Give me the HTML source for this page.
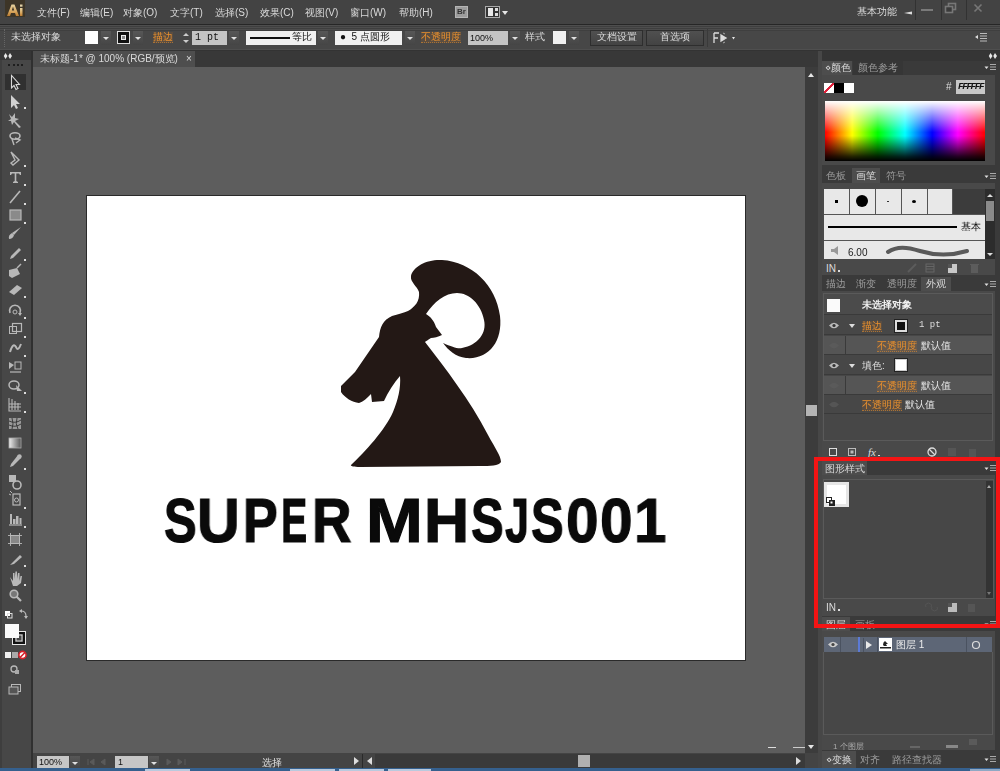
<!DOCTYPE html>
<html><head><meta charset="utf-8">
<style>
*{margin:0;padding:0;box-sizing:border-box}
html,body{width:1000px;height:771px;overflow:hidden;background:#3c3c3c;font-family:"Liberation Sans",sans-serif;color:#dadada;font-size:10px}
.a{position:absolute}
.t{position:absolute;white-space:nowrap;line-height:1;will-change:transform}
.or{color:#e8902e;background:rgba(190,110,40,.16);text-decoration:none!important;border-bottom:1px dotted rgba(232,144,46,.55);padding-bottom:0}
.dd{position:absolute;width:10px;height:14px;background:linear-gradient(#575757,#454545)}
.dd:after{content:"";position:absolute;left:2px;top:6px;border-left:3px solid transparent;border-right:3px solid transparent;border-top:3px solid #e0e0e0}
</style></head><body>
<!-- MENU BAR -->
<div class="a" id="menubar" style="left:0;top:0;width:1000px;height:24px;background:#434343"></div>
<div class="a" style="left:5px;top:0;width:20px;height:17px;background:#3d3527"></div>
<svg class="a" style="left:5px;top:0" width="20" height="17"><defs><linearGradient id="aig" x1="0" y1="0" x2="0" y2="1"><stop offset="0" stop-color="#e6d2a0"/><stop offset="0.6" stop-color="#d9a860"/><stop offset="1" stop-color="#b87a30"/></linearGradient></defs>
<path d="M2 16L6.5 4.5H9.5L14 16H11L10 13H6L5 16ZM6.8 10.5H9.2L8 6.5Z" fill="url(#aig)"/><rect x="15" y="8" width="2.5" height="8" fill="url(#aig)"/><rect x="15" y="4.5" width="2.5" height="2.2" fill="#e0d0a8"/></svg>
<div class="t" style="left:37px;top:8px">文件(F)</div>
<div class="t" style="left:80px;top:8px">编辑(E)</div>
<div class="t" style="left:123px;top:8px">对象(O)</div>
<div class="t" style="left:170px;top:8px">文字(T)</div>
<div class="t" style="left:215px;top:8px">选择(S)</div>
<div class="t" style="left:260px;top:8px">效果(C)</div>
<div class="t" style="left:305px;top:8px">视图(V)</div>
<div class="t" style="left:350px;top:8px">窗口(W)</div>
<div class="t" style="left:399px;top:8px">帮助(H)</div>
<div class="a" style="left:455px;top:6px;width:13px;height:12px;background:#9c9c9c;border:1px solid #b5b5b5"></div>
<div class="t" style="left:457px;top:8px;font-size:8px;font-weight:bold;color:#333">Br</div>
<div class="a" style="left:485px;top:6px;width:15px;height:12px;background:#333;border:1px solid #aaa"></div>
<div class="a" style="left:488px;top:8px;width:5px;height:8px;background:#e8e8e8"></div>
<div class="a" style="left:495px;top:8px;width:3px;height:3px;background:#ddd"></div>
<div class="a" style="left:495px;top:13px;width:3px;height:3px;background:#ddd"></div>
<div class="a" style="left:502px;top:11px;border-left:3px solid transparent;border-right:3px solid transparent;border-top:4px solid #e6e6e6"></div>
<div class="t" style="left:857px;top:7px">基本功能</div>
<svg class="a" style="left:903px;top:10px" width="10" height="6"><path d="M1 3L9 1.5L9 4.5Z" fill="#ddd"/></svg>
<div class="a" style="left:915px;top:0;width:1px;height:20px;background:#323232"></div>
<div class="a" style="left:941px;top:0;width:1px;height:20px;background:#323232"></div>
<div class="a" style="left:966px;top:0;width:1px;height:20px;background:#323232"></div>
<div class="a" style="left:921px;top:9px;width:12px;height:2px;background:#7a7a7a"></div>
<svg class="a" style="left:944px;top:2px" width="14" height="12"><rect x="4.5" y="1.5" width="7" height="6" fill="none" stroke="#777" stroke-width="1.6"/><rect x="1.5" y="4.5" width="7" height="6" fill="#3a3a3a" stroke="#777" stroke-width="1.6"/></svg>
<svg class="a" style="left:973px;top:3px" width="10" height="10"><path d="M1.5 1.5L8.5 8.5M8.5 1.5L1.5 8.5" stroke="#777" stroke-width="1.6"/></svg>


<!-- CONTROL BAR -->
<div class="a" style="left:0;top:24px;width:1000px;height:1px;background:#262626"></div>
<div class="a" style="left:0;top:25px;width:1000px;height:26px;background:linear-gradient(#4e4e4e 0,#4e4e4e 1px,#3e3e3e 1px,#3e3e3e 2px,#4d4d4d 2px,#4d4d4d 3px,#3e3e3e 3px,#3e3e3e 4px,#4c4c4c 4px,#4c4c4c 5px,#3f3f3f 5px,#3f3f3f 6px,#474747 6px,#474747 24px,#4f4f4f 24px,#4f4f4f 25px,#333 25px)"></div>
<div class="a" style="left:4px;top:29px;width:2px;height:18px;border-left:1px dotted #666"></div>
<div class="t" style="left:11px;top:32px">未选择对象</div>
<div class="a" style="left:85px;top:31px;width:13px;height:13px;background:#fff"></div>
<div class="dd" style="left:101px;top:31px"></div>
<div class="a" style="left:117px;top:31px;width:13px;height:13px;background:#111;border:1px solid #e0e0e0"></div><div class="a" style="left:121px;top:35px;width:5px;height:5px;background:#888;border:1px solid #eee"></div>
<div class="dd" style="left:133px;top:31px"></div>
<div class="t or" style="left:153px;top:32px;text-decoration:underline">描边</div>
<div class="a" style="left:183px;top:33px;border-left:3px solid transparent;border-right:3px solid transparent;border-bottom:3px solid #ccc"></div><div class="a" style="left:183px;top:40px;border-left:3px solid transparent;border-right:3px solid transparent;border-top:3px solid #ccc"></div>
<div class="a" style="left:192px;top:31px;width:35px;height:14px;background:#c4c4c4"></div>
<div class="t" style="left:195px;top:33px;color:#111;font-family:'Liberation Mono';font-size:10px">1 pt</div>
<div class="dd" style="left:229px;top:31px"></div>
<div class="a" style="left:246px;top:31px;width:70px;height:14px;background:#f0f0f0"></div>
<div class="a" style="left:250px;top:37px;width:40px;height:2px;background:#111"></div>
<div class="t" style="left:292px;top:32px;color:#111">等比</div>
<div class="dd" style="left:318px;top:31px"></div>
<div class="a" style="left:335px;top:31px;width:67px;height:14px;background:#f0f0f0"></div>
<div class="t" style="left:340px;top:32px;color:#111">●&nbsp; 5 点圆形</div>
<div class="dd" style="left:405px;top:31px"></div>
<div class="t or" style="left:421px;top:32px;text-decoration:underline">不透明度</div>
<div class="a" style="left:468px;top:31px;width:40px;height:14px;background:#c4c4c4"></div>
<div class="t" style="left:470px;top:34px;color:#111;font-size:9px">100%</div>
<div class="dd" style="left:510px;top:31px"></div>
<div class="t" style="left:525px;top:32px">样式</div>
<div class="a" style="left:553px;top:31px;width:13px;height:13px;background:#f0f0f0"></div>
<div class="dd" style="left:569px;top:31px"></div>
<div class="a" style="left:590px;top:30px;width:53px;height:16px;background:linear-gradient(#505050,#434343);border:1px solid #2e2e2e"></div>
<div class="t" style="left:597px;top:32px">文档设置</div>
<div class="a" style="left:646px;top:30px;width:58px;height:16px;background:linear-gradient(#505050,#434343);border:1px solid #2e2e2e"></div>
<div class="t" style="left:660px;top:32px">首选项</div>
<div class="a" style="left:707px;top:29px;width:1px;height:18px;background:#3a3a3a"></div>
<svg class="a" style="left:712px;top:31px" width="26" height="14"><path d="M2 2V12M2 2H7M2 7H6M9 4L14 7L9 10Z" stroke="#ddd" stroke-width="1.3" fill="#ddd"/><path d="M11 2L13 3M11 12L13 11" stroke="#aaa"/><path d="M20 6L23 6L21.5 8.5Z" fill="#e6e6e6"/></svg>


<svg class="a" style="left:974px;top:32px" width="14" height="10"><path d="M1 5L4 3L4 7Z" fill="#ddd"/><path d="M6 1.5H13M6 4H13M6 6.5H13M6 9H13" stroke="#bbb" stroke-width="1"/></svg>
<!-- LEFT TOOLBAR -->
<div class="a" style="left:0;top:51px;width:33px;height:720px;background:#474747"></div>
<div class="a" style="left:0;top:51px;width:2px;height:720px;background:#3e3e3e"></div>
<div class="a" style="left:31px;top:51px;width:2px;height:720px;background:#303030"></div>

<div class="a" style="left:0;top:51px;width:31px;height:9px;background:#363636"></div>
<svg class="a" style="left:3px;top:52px" width="10" height="8"><path d="M2.5 1L4.5 4L2.5 7L0.8 4ZM7 1L9 4L7 7L5.3 4Z" fill="#e6e6e6"/></svg>
<div class="a" style="left:8px;top:64px;width:15px;height:2px;border-top:2px dotted #1e1e1e"></div>
<div class="a" style="left:5px;top:74px;width:21px;height:16px;background:#303030"></div>
<svg class="a" style="left:0;top:60px" width="32" height="650" fill="#b8b8b8" stroke="none">
<g transform="translate(0,-60)">
<!-- selection -->
<path d="M11.5 75.5 L11.5 88 L14 85.5 L16 89.5 L18 88.5 L16 84.5 L19.5 84.5 Z" fill="#2a2a2a" stroke="#d8d8d8" stroke-width="1.1"/>
<!-- direct selection -->
<path d="M11 95 L11 108 L14 105 L16 109 L18 108 L16 104 L20 104 Z" fill="#d0d0d0"/>
<!-- wand -->
<path d="M9 114 L12 117 L15 113 L15 118 L19 119 L15 121 L21 127 L19 128 L14 122 L12 125 L11 121 L8 121 L11 119 Z" />
<!-- lasso -->
<ellipse cx="15" cy="136" rx="5" ry="3.2" fill="none" stroke="#b8b8b8" stroke-width="1.6"/><path d="M12 139 L14 145 M15 138 L20 140 L16 143" fill="none" stroke="#b8b8b8" stroke-width="1.4"/>
<!-- pen -->
<path d="M11 152 L19 160 L13 165 L11 163 L15 160 Z" fill="none" stroke="#b8b8b8" stroke-width="1.4"/>
<!-- type -->
<path d="M10 172 L21 172 L21 175 L20 175 L19 173.5 L16.3 173.5 L16.3 181 L18 182 L18 183 L13 183 L13 182 L14.7 181 L14.7 173.5 L12 173.5 L11 175 L10 175 Z"/>
<!-- line -->
<path d="M10 203 L20 191" stroke="#b8b8b8" stroke-width="1.6"/>
<!-- rect -->
<rect x="10" y="210" width="11" height="10" fill="#8a8a8a" stroke="#b8b8b8" stroke-width="1.2"/>
<!-- brush -->
<path d="M21 227 L14 235 L12 233 Z"/><path d="M12 233 Q8 235 9 239 Q13 239 14 235 Z"/>
<!-- pencil -->
<path d="M19 248 L21 250 L13 258 L10 259 L11 256 Z"/>
<!-- blob brush -->
<path d="M9 270 L17 268 L20 274 L12 278 L9 276 Z"/><path d="M17 268 L21 264" stroke="#b8b8b8" stroke-width="1.5"/>
<!-- eraser -->
<path d="M9 292 L17 285 L22 288 L14 295 Z"/>
<!-- rotate -->
<path d="M10 313 A5.5 5.5 0 1 1 20 313" fill="none" stroke="#b8b8b8" stroke-width="1.6"/><path d="M18 313 L22 313 L20 316Z"/><circle cx="15" cy="312" r="2" fill="none" stroke="#b8b8b8"/>
<!-- scale -->
<rect x="9.5" y="326.5" width="7" height="7" fill="none" stroke="#b8b8b8"/><rect x="12.5" y="323.5" width="9" height="8" fill="none" stroke="#b8b8b8" stroke-width="1.2"/>
<!-- warp -->
<path d="M10 352 Q13 342 16 347 Q18 352 21 344" fill="none" stroke="#b8b8b8" stroke-width="2"/>
<!-- free transform -->
<path d="M9 362 L14 365 L9 369 Z"/><rect x="15" y="362" width="6" height="7" fill="none" stroke="#b8b8b8"/><path d="M10 372 L21 372" stroke="#b8b8b8" stroke-width="1.2"/>
<!-- shape builder -->
<ellipse cx="14" cy="385" rx="5" ry="4" fill="none" stroke="#b8b8b8" stroke-width="1.5"/><path d="M16 385 L22 391 L17 391 Z"/>
<!-- perspective grid -->
<path d="M9 398 L9 411 L21 411 M12 399 L12 410 M15 401 L15 410 M18 403 L18 410 M9 404 L21 404 M9 407 L21 407" stroke="#b8b8b8" stroke-width="1.1" fill="none"/>
<!-- mesh -->
<rect x="9" y="418" width="12" height="11" fill="#999"/><path d="M9 421 Q15 424 21 420 M9 425 Q15 428 21 424 M12 418 Q14 424 12 429 M17 418 Q15 424 18 429" stroke="#333" fill="none" stroke-width="0.9"/>
<!-- gradient -->
<defs><linearGradient id="gg"><stop offset="0" stop-color="#eee"/><stop offset="1" stop-color="#555"/></linearGradient></defs>
<rect x="9" y="438" width="12" height="10" fill="url(#gg)" stroke="#aaa" stroke-width="0.8"/>
<!-- eyedropper -->
<path d="M18 455 L21 458 L13 466 L10 467 L11 464 Z"/><circle cx="19.5" cy="456.5" r="2.2"/>
<!-- blend -->
<rect x="9" y="475" width="7" height="7"/><circle cx="17" cy="485" r="4" fill="none" stroke="#b8b8b8" stroke-width="1.6"/>
<!-- symbol sprayer -->
<rect x="13" y="494" width="7" height="11" fill="none" stroke="#b8b8b8" stroke-width="1.2"/><circle cx="16.5" cy="500" r="2" fill="none" stroke="#b8b8b8"/><path d="M10 491 L12 493 M9 494 L11 495" stroke="#b8b8b8"/>
<!-- column graph -->
<path d="M9 525 L22 525" stroke="#b8b8b8" stroke-width="1.2"/><rect x="10" y="514" width="2" height="10"/><rect x="13" y="519" width="2.5" height="5"/><rect x="16" y="516" width="2.5" height="8"/><rect x="19.5" y="518" width="2" height="6"/>
<!-- artboard -->
<rect x="10.5" y="535.5" width="9" height="8" fill="#888" stroke="#b8b8b8"/><path d="M8 535.5 L22 535.5 M8 543.5 L22 543.5 M10.5 533 L10.5 546 M19.5 533 L19.5 546" stroke="#b8b8b8" stroke-width="0.9"/>
<!-- slice -->
<path d="M10 565 L20 555 L22 557 L14 564 Z"/>
<!-- hand -->
<path d="M10 577 L13 581 L13 573 L14.5 573 L14.5 579 L15.5 571.5 L17 571.5 L17 579 L18 573 L19.5 573 L19.5 581 L20.5 576 L22 576 L21 583 L17 586 L13 586 Z"/>
<!-- zoom -->
<circle cx="14" cy="594" r="3.8" fill="#777" stroke="#b8b8b8" stroke-width="1.6"/><path d="M16.5 596.5 L21 601" stroke="#b8b8b8" stroke-width="2.2"/>
<!-- default fill stroke -->
<rect x="5" y="611" width="5" height="5" fill="#fff"/><rect x="7.5" y="613.5" width="4.5" height="4.5" fill="none" stroke="#ddd" stroke-width="1"/>
<path d="M21 611 Q26 611 26 616" fill="none" stroke="#bbb" stroke-width="1.2"/><path d="M19 611 L22 609 L22 613Z M24 616 L28 616 L26 619Z" fill="#bbb"/>
<!-- fill & stroke -->
<rect x="12.5" y="631.5" width="13" height="13" fill="none" stroke="#e6e6e6" stroke-width="1"/>
<rect x="14" y="633" width="10" height="10" fill="none" stroke="#111" stroke-width="2"/>
<rect x="16" y="635" width="6" height="6" fill="none" stroke="#ddd" stroke-width="1"/>
<rect x="5" y="624" width="14" height="14" fill="#fafafa"/>
<!-- color gradient none -->
<rect x="5" y="652" width="6" height="6" fill="#f0f0f0"/><rect x="12" y="652" width="6" height="6" fill="#aaa"/><circle cx="22.5" cy="655" r="3.6" fill="#fff" stroke="#d8202a" stroke-width="1.6"/><path d="M20 657.5 L25 652.5" stroke="#d8202a" stroke-width="1.6"/>
<!-- draw mode -->
<circle cx="14" cy="669" r="3" fill="none" stroke="#b8b8b8" stroke-width="1.3"/><rect x="15" y="670" width="4" height="4" fill="#aaa"/>
<!-- screen mode -->
<rect x="11.5" y="684.5" width="9" height="7" fill="none" stroke="#b8b8b8"/><rect x="9" y="687" width="9" height="7" fill="#555" stroke="#b8b8b8" stroke-width="1"/>
<!-- flyout dots -->
<g fill="#ddd">
<rect x="24" y="107" width="2" height="2"/><rect x="24" y="165" width="2" height="2"/><rect x="24" y="184" width="2" height="2"/><rect x="24" y="203" width="2" height="2"/><rect x="24" y="222" width="2" height="2"/><rect x="24" y="259" width="2" height="2"/><rect x="24" y="296" width="2" height="2"/><rect x="24" y="317" width="2" height="2"/><rect x="24" y="336" width="2" height="2"/><rect x="24" y="355" width="2" height="2"/><rect x="24" y="392" width="2" height="2"/><rect x="24" y="411" width="2" height="2"/><rect x="24" y="468" width="2" height="2"/><rect x="24" y="507" width="2" height="2"/><rect x="24" y="526" width="2" height="2"/><rect x="24" y="565" width="2" height="2"/><rect x="24" y="584" width="2" height="2"/>
</g>
</g></svg>
<!-- DOC TAB ROW -->
<div class="a" style="left:33px;top:51px;width:785px;height:16px;background:#383838"></div>
<div class="a" style="left:33px;top:51px;width:162px;height:16px;background:#4e4e4e"></div>
<div class="t" style="left:40px;top:54px">未标题-1* @ 100% (RGB/预览)</div>
<div class="t" style="left:186px;top:54px">×</div>

<!-- CANVAS -->
<div class="a" style="left:33px;top:67px;width:772px;height:686px;background:#5d5d5d"></div>
<div class="a" style="left:86px;top:195px;width:660px;height:466px;background:#fff;border:1px solid #2a2a2a"></div>

<svg class="a" style="left:0;top:0" width="1000" height="771"><path fill="#231815" d="M341 386
L355 372 L379 337
C380 327 383 320 392 316
C398 314 404 313 408 311
C415 307 420 301 419 292
C417 286 410 282 411 276
C413 266 428 259 442 260
C472 262 496 285 500 316
C503 342 488 360 466 358
C456 357 448 350 443 343
C452 347 458 349 462 348
C478 345 487 333 484 320
C481 304 469 293 457 293
C445 293 434 302 426 314
C431 317 434 321 436 327
L442 335
C438 337 434 338 431 338
C428 340 426 341 425 342
C445 368 470 400 488 435
C495 448 501 456 501 462
C499 466 490 466 480 466
L360 467
C354 467 350 466 351 465
C365 452 385 430 393 412
C398 400 401 388 400 376
C394 383 388 392 384 401
L372 402 L371 394
C367 398 363 402 359 403
C352 402 345 398 341 392 Z"/></svg>
<div class="t" style="left:164.43px;top:489px;font-size:62.5px;font-weight:bold;color:#0a0a0a;-webkit-text-stroke:1.2px #0a0a0a;transform:scaleX(0.7838);transform-origin:0 0">S</div>
<div class="t" style="left:197.22px;top:489px;font-size:62.5px;font-weight:bold;color:#0a0a0a;-webkit-text-stroke:1.2px #0a0a0a;transform:scaleX(0.9459);transform-origin:0 0">U</div>
<div class="t" style="left:242.67px;top:489px;font-size:62.5px;font-weight:bold;color:#0a0a0a;-webkit-text-stroke:1.2px #0a0a0a;transform:scaleX(0.8333);transform-origin:0 0">P</div>
<div class="t" style="left:281.49px;top:489px;font-size:62.5px;font-weight:bold;color:#0a0a0a;-webkit-text-stroke:1.2px #0a0a0a;transform:scaleX(0.6286);transform-origin:0 0">E</div>
<div class="t" style="left:311.50px;top:489px;font-size:62.5px;font-weight:bold;color:#0a0a0a;-webkit-text-stroke:1.2px #0a0a0a;transform:scaleX(0.8750);transform-origin:0 0">R</div>
<div class="t" style="left:365.64px;top:489px;font-size:62.5px;font-weight:bold;color:#0a0a0a;-webkit-text-stroke:1.2px #0a0a0a;transform:scaleX(1.0909);transform-origin:0 0">M</div>
<div class="t" style="left:424.00px;top:489px;font-size:62.5px;font-weight:bold;color:#0a0a0a;-webkit-text-stroke:1.2px #0a0a0a;transform:scaleX(1.0000);transform-origin:0 0">H</div>
<div class="t" style="left:471.43px;top:489px;font-size:62.5px;font-weight:bold;color:#0a0a0a;-webkit-text-stroke:1.2px #0a0a0a;transform:scaleX(0.7838);transform-origin:0 0">S</div>
<div class="t" style="left:505.31px;top:489px;font-size:62.5px;font-weight:bold;color:#0a0a0a;-webkit-text-stroke:1.2px #0a0a0a;transform:scaleX(0.6897);transform-origin:0 0">J</div>
<div class="t" style="left:531.43px;top:489px;font-size:62.5px;font-weight:bold;color:#0a0a0a;-webkit-text-stroke:1.2px #0a0a0a;transform:scaleX(0.7838);transform-origin:0 0">S</div>
<div class="t" style="left:566.13px;top:489px;font-size:62.5px;font-weight:bold;color:#0a0a0a;-webkit-text-stroke:1.2px #0a0a0a;transform:scaleX(0.9333);transform-origin:0 0">0</div>
<div class="t" style="left:600.13px;top:489px;font-size:62.5px;font-weight:bold;color:#0a0a0a;-webkit-text-stroke:1.2px #0a0a0a;transform:scaleX(0.9333);transform-origin:0 0">0</div>
<div class="t" style="left:634.28px;top:489px;font-size:62.5px;font-weight:bold;color:#0a0a0a;-webkit-text-stroke:1.2px #0a0a0a;transform:scaleX(0.9310);transform-origin:0 0">1</div>
<!-- V SCROLL -->
<div class="a" style="left:805px;top:67px;width:13px;height:686px;background:#3c3c3c"></div>
<div class="a" style="left:806px;top:405px;width:11px;height:11px;background:#b4b4b4"></div>

<!-- STATUS BAR -->
<div class="a" style="left:33px;top:753px;width:785px;height:15px;background:#444"></div>
<div class="a" style="left:375px;top:754px;width:430px;height:14px;background:#3a3a3a"></div>
<div class="a" style="left:37px;top:756px;width:32px;height:12px;background:#c6c6c6"></div>
<div class="t" style="left:39px;top:758px;font-size:9px;color:#111">100%</div>
<div class="dd" style="left:70px;top:756px;height:12px"></div>
<svg class="a" style="left:86px;top:757px" width="24" height="10"><path d="M2 2V8M8 2L4 5L8 8ZM19 2L15 5L19 8Z" fill="#5a5a5a" stroke="#5a5a5a"/></svg>
<div class="a" style="left:115px;top:756px;width:33px;height:12px;background:#c6c6c6"></div>
<div class="t" style="left:118px;top:758px;font-size:9px;color:#111">1</div>
<div class="dd" style="left:149px;top:756px;height:12px"></div>
<svg class="a" style="left:164px;top:757px" width="24" height="10"><path d="M3 2L7 5L3 8ZM14 2L18 5L14 8ZM21 2V8" fill="#5a5a5a" stroke="#5a5a5a"/></svg>
<div class="t" style="left:262px;top:758px;color:#e0e0e0">选择</div>
<div class="a" style="left:354px;top:757px;border-top:4px solid transparent;border-bottom:4px solid transparent;border-left:5px solid #ddd"></div>
<div class="a" style="left:362px;top:754px;width:1px;height:14px;background:#2a2a2a"></div>
<div class="a" style="left:367px;top:757px;border-top:4px solid transparent;border-bottom:4px solid transparent;border-right:5px solid #ddd"></div>
<div class="a" style="left:578px;top:755px;width:12px;height:12px;background:#b0b0b0"></div>
<div class="a" style="left:796px;top:757px;border-top:4px solid transparent;border-bottom:4px solid transparent;border-left:5px solid #ddd"></div>
<div class="a" style="left:805px;top:753px;width:13px;height:15px;background:#444"></div>
<div class="a" style="left:808px;top:73px;border-left:3.5px solid transparent;border-right:3.5px solid transparent;border-bottom:4px solid #e6e6e6"></div>
<div class="a" style="left:808px;top:745px;border-left:3.5px solid transparent;border-right:3.5px solid transparent;border-top:4px solid #e6e6e6"></div>
<div class="a" style="left:0;top:768px;width:1000px;height:3px;background:#35608e"></div>
<div class="a" style="left:145px;top:769px;width:45px;height:2px;background:#b9cade"></div>
<div class="a" style="left:290px;top:769px;width:45px;height:2px;background:#b9cade"></div>
<div class="a" style="left:339px;top:769px;width:45px;height:2px;background:#b9cade"></div>
<div class="a" style="left:388px;top:769px;width:43px;height:2px;background:#b9cade"></div>
<div class="a" style="left:970px;top:769px;width:30px;height:2px;background:#8fa8c4"></div>

<div class="a" style="left:768px;top:747px;width:8px;height:1px;background:#ddd"></div>
<div class="a" style="left:793px;top:747px;width:12px;height:1px;background:#ccc"></div>
<!-- RIGHT PANEL -->
<div class="a" style="left:818px;top:51px;width:182px;height:717px;background:#3a3a3a"></div>
<div class="a" style="left:818px;top:51px;width:4px;height:717px;background:#474747"></div>
<!-- dock header -->
<div class="a" style="left:822px;top:51px;width:178px;height:10px;background:#353535"></div>
<svg class="a" style="left:988px;top:52px" width="10" height="8"><path d="M2.5 1L4.5 4L2.5 7L0.8 4ZM7 1L9 4L7 7L5.3 4Z" fill="#e6e6e6"/></svg>
<!-- group1 color -->
<div class="a" style="left:822px;top:61px;width:173px;height:104px;background:#494949"></div>
<div class="a" style="left:822px;top:61px;width:173px;height:14px;background:#3a3a3a"></div>
<div class="a" style="left:822px;top:61px;width:30px;height:14px;background:#4d4d4d"></div>
<div class="t" style="left:825px;top:63px;font-size:10px">&#8900;颜色</div>
<div class="a" style="left:853px;top:61px;width:50px;height:14px;background:#363636"></div>
<div class="t" style="left:858px;top:63px;color:#9c9c9c">颜色参考</div>
<div class="a" style="left:824px;top:83px;width:10px;height:10px;background:linear-gradient(135deg,#fff 42%,#e0203a 42%,#e0203a 58%,#fff 58%)"></div>
<div class="a" style="left:834px;top:83px;width:10px;height:10px;background:#000"></div>
<div class="a" style="left:844px;top:83px;width:10px;height:10px;background:#fff"></div>
<div class="t" style="left:946px;top:82px;color:#ddd">#</div>
<div class="a" style="left:956px;top:80px;width:29px;height:14px;background:#c8c8c8"></div>
<div class="t" style="left:958px;top:83px;color:#111;font-size:9px;font-family:'Liberation Mono';letter-spacing:-1.2px;font-style:italic;font-weight:bold">FFFFFF</div>
<div class="a" style="left:825px;top:101px;width:160px;height:60px;background:linear-gradient(to bottom,rgba(255,255,255,1) 0%,rgba(255,255,255,0) 52%,rgba(0,0,0,0) 58%,rgba(0,0,0,.85) 92%,rgba(0,0,0,1) 100%),linear-gradient(to right,#f00 0%,#ff0 17%,#0f0 33%,#0ff 50%,#00f 67%,#f0f 83%,#f00 100%)"></div>
<!-- group2 brushes -->
<div class="a" style="left:822px;top:168px;width:173px;height:107px;background:#494949"></div>
<div class="a" style="left:822px;top:168px;width:173px;height:15px;background:#3a3a3a"></div>
<div class="t" style="left:826px;top:171px;color:#9c9c9c">色板</div>
<div class="a" style="left:852px;top:168px;width:28px;height:15px;background:#4d4d4d"></div>
<div class="t" style="left:856px;top:171px">画笔</div>
<div class="t" style="left:886px;top:171px;color:#9c9c9c">符号</div>
<div class="a" style="left:824px;top:189px;width:161px;height:70px;background:#e8e8e8"></div>
<div class="a" style="left:953px;top:189px;width:32px;height:25px;background:#3c3c3c"></div>
<div class="a" style="left:849px;top:189px;width:1px;height:25px;background:#555"></div>
<div class="a" style="left:875px;top:189px;width:1px;height:25px;background:#555"></div>
<div class="a" style="left:901px;top:189px;width:1px;height:25px;background:#555"></div>
<div class="a" style="left:927px;top:189px;width:1px;height:25px;background:#555"></div>
<div class="a" style="left:952px;top:189px;width:1px;height:25px;background:#555"></div>
<div class="a" style="left:824px;top:214px;width:161px;height:1px;background:#555"></div>
<div class="a" style="left:824px;top:240px;width:161px;height:1px;background:#555"></div>
<div class="a" style="left:835px;top:200px;width:3px;height:3px;background:#000"></div>
<div class="a" style="left:856px;top:195px;width:12px;height:12px;border-radius:50%;background:#000"></div>
<div class="a" style="left:887px;top:201px;width:2px;height:1px;background:#333"></div>
<div class="a" style="left:912px;top:200px;width:4px;height:3px;border-radius:50%;background:#000"></div>
<div class="a" style="left:828px;top:226px;width:129px;height:2px;background:#000"></div>
<div class="t" style="left:961px;top:222px;color:#111">基本</div>
<div class="t" style="left:848px;top:248px;color:#222;font-size:10px">6.00</div>
<svg class="a" style="left:829px;top:244px" width="14" height="12"><path d="M2 5h3l4-3v9l-4-3H2z" fill="#999"/></svg>
<svg class="a" style="left:885px;top:243px" width="85" height="14"><path d="M3 9 C12 3,22 4,35 8 S62 14,82 8" stroke="#5a5a5a" stroke-width="4" fill="none" stroke-linecap="round" style="filter:blur(0.6px)"/></svg>
<div class="a" style="left:985px;top:189px;width:10px;height:70px;background:#2c2c2c"></div>
<div class="a" style="left:986px;top:201px;width:8px;height:20px;background:#8a8a8a"></div>
<svg class="a" style="left:824px;top:261px" width="170" height="14">
<text x="2" y="11" font-family="Liberation Sans" font-size="10" fill="#ddd">IN</text><rect x="14" y="9" width="2" height="2" fill="#ddd"/>
<path d="M84 11L92 3" stroke="#5c5c5c" stroke-width="2"/>
<rect x="102" y="3" width="8" height="8" fill="none" stroke="#666"/><path d="M102 5.5H110M102 8H110" stroke="#666"/>
<rect x="124" y="3" width="9" height="9" fill="#c8c8c8"/><rect x="124" y="3" width="4" height="4" fill="#555"/>
<rect x="147" y="4" width="7" height="8" fill="#5c5c5c"/><rect x="146" y="3" width="9" height="1" fill="#5c5c5c"/>
</svg>
<div class="a" style="left:987px;top:194px;border-left:3px solid transparent;border-right:3px solid transparent;border-bottom:3px solid #ddd"></div>
<div class="a" style="left:987px;top:253px;border-left:3px solid transparent;border-right:3px solid transparent;border-top:3px solid #ddd"></div>
<!-- group3 appearance -->
<div class="a" style="left:822px;top:277px;width:173px;height:183px;background:#494949"></div>
<div class="a" style="left:822px;top:277px;width:173px;height:14px;background:#3a3a3a"></div>
<div class="t" style="left:826px;top:279px;color:#9c9c9c">描边</div>
<div class="t" style="left:856px;top:279px;color:#9c9c9c">渐变</div>
<div class="t" style="left:887px;top:279px;color:#9c9c9c">透明度</div>
<div class="a" style="left:921px;top:277px;width:30px;height:14px;background:#4d4d4d"></div>
<div class="t" style="left:926px;top:279px">外观</div>
<div class="a" style="left:823px;top:293px;width:170px;height:148px;background:#474747;border:1px solid #5a5a5a"></div>
<div class="a" style="left:824px;top:294px;width:168px;height:21px;background:#4b4b4b;border-bottom:1px solid #3a3a3a"></div>
<div class="a" style="left:827px;top:299px;width:13px;height:13px;background:#fafafa"></div>
<div class="t" style="left:862px;top:300px;color:#f0f0f0;font-weight:bold">未选择对象</div>
<div class="a" style="left:824px;top:316px;width:168px;height:19px;background:#474747;border-bottom:1px solid #3a3a3a"></div>
<div class="a" style="left:824px;top:336px;width:168px;height:19px;background:#555555;border-bottom:1px solid #3a3a3a"></div>
<div class="a" style="left:824px;top:356px;width:168px;height:19px;background:#474747;border-bottom:1px solid #3a3a3a"></div>
<div class="a" style="left:824px;top:376px;width:168px;height:19px;background:#555555;border-bottom:1px solid #3a3a3a"></div>
<div class="a" style="left:824px;top:395px;width:168px;height:19px;background:#474747;border-bottom:1px solid #3a3a3a"></div>
<div class="a" style="left:845px;top:336px;width:1px;height:19px;background:#3a3a3a"></div>
<div class="a" style="left:845px;top:376px;width:1px;height:19px;background:#3a3a3a"></div>
<svg class="a" style="left:828px;top:321px" width="12" height="9"><path d="M1 4.5Q6 -1 11 4.5Q6 10 1 4.5z" fill="#bbb"/><circle cx="6" cy="4.5" r="1.6" fill="#333"/></svg>
<svg class="a" style="left:828px;top:341px" width="12" height="9"><path d="M1 4.5Q6 -1 11 4.5Q6 10 1 4.5z" fill="#5a5a5a"/></svg>
<svg class="a" style="left:828px;top:361px" width="12" height="9"><path d="M1 4.5Q6 -1 11 4.5Q6 10 1 4.5z" fill="#bbb"/><circle cx="6" cy="4.5" r="1.6" fill="#333"/></svg>
<svg class="a" style="left:828px;top:381px" width="12" height="9"><path d="M1 4.5Q6 -1 11 4.5Q6 10 1 4.5z" fill="#5a5a5a"/></svg>
<svg class="a" style="left:828px;top:400px" width="12" height="9"><path d="M1 4.5Q6 -1 11 4.5Q6 10 1 4.5z" fill="#555"/></svg>
<div class="a" style="left:849px;top:324px;border-left:3px solid transparent;border-right:3px solid transparent;border-top:4px solid #ddd"></div>
<div class="a" style="left:849px;top:364px;border-left:3px solid transparent;border-right:3px solid transparent;border-top:4px solid #ddd"></div>
<div class="t or" style="left:862px;top:321px;text-decoration:underline">描边</div>
<div class="a" style="left:895px;top:320px;width:12px;height:12px;background:#111;border:2px solid #ddd;outline:1px solid #222"></div>
<div class="t" style="left:919px;top:321px;font-family:'Liberation Mono';font-size:9px;color:#ddd">1 pt</div>
<div class="t or" style="left:877px;top:341px;text-decoration:underline">不透明度</div>
<div class="t" style="left:921px;top:341px;color:#e6e6e6">默认值</div>
<div class="t" style="left:862px;top:361px;color:#ddd">填色:</div>
<div class="a" style="left:895px;top:359px;width:12px;height:12px;background:#fff;border:1px solid #ccc;outline:1px solid #222"></div>
<div class="t or" style="left:877px;top:381px;text-decoration:underline">不透明度</div>
<div class="t" style="left:921px;top:381px;color:#e6e6e6">默认值</div>
<div class="t or" style="left:862px;top:400px;text-decoration:underline">不透明度</div>
<div class="t" style="left:905px;top:400px;color:#e6e6e6">默认值</div>
<!-- appearance footer -->
<svg class="a" style="left:826px;top:446px" width="160" height="12">
<rect x="3.5" y="2.5" width="7" height="7" fill="none" stroke="#ddd" stroke-width="1"/>
<rect x="22.5" y="2.5" width="7" height="7" fill="none" stroke="#bbb"/><rect x="24.5" y="4.5" width="3" height="3" fill="#bbb"/>
<text x="42" y="10" font-family="Liberation Serif" font-style="italic" font-size="11" fill="#ddd">fx</text><rect x="52" y="9" width="2" height="1" fill="#ddd"/>
<circle cx="106" cy="6" r="4" fill="none" stroke="#ddd" stroke-width="1.3"/><path d="M103 3L109 9" stroke="#ddd" stroke-width="1.3"/>
<rect x="122" y="2" width="8" height="8" fill="#555"/>
<rect x="143" y="3" width="7" height="8" fill="#555"/>
</svg>
<!-- group4 graphic styles -->
<div class="a" style="left:822px;top:461px;width:173px;height:155px;background:#494949"></div>
<div class="a" style="left:822px;top:461px;width:173px;height:14px;background:#3a3a3a"></div>
<div class="a" style="left:822px;top:461px;width:45px;height:14px;background:#4d4d4d"></div>
<div class="t" style="left:825px;top:464px">图形样式</div>
<div class="a" style="left:823px;top:479px;width:171px;height:120px;background:#474747;border:1px solid #5a5a5a"></div>
<div class="a" style="left:824px;top:482px;width:25px;height:25px;background:#e6e6e6"></div>
<div class="a" style="left:827px;top:485px;width:19px;height:19px;background:#fff"></div>
<svg class="a" style="left:824px;top:600px" width="160" height="14">
<text x="2" y="11" font-family="Liberation Sans" font-size="10" fill="#ddd">IN</text><rect x="14" y="9" width="2" height="2" fill="#ddd"/>
<path d="M102 7a3 2.5 0 1 1 5 0M108 7a3 2.5 0 1 0 5 0" stroke="#555" fill="none"/>
<rect x="124" y="3" width="9" height="9" fill="#bbb"/><rect x="124" y="3" width="4" height="4" fill="#555"/>
<rect x="144" y="4" width="7" height="8" fill="#555"/>
</svg>
<div class="a" style="left:986px;top:481px;width:7px;height:117px;background:#333"></div>
<svg class="a" style="left:826px;top:497px" width="10" height="10"><rect x="0.5" y="0.5" width="5" height="5" fill="#fff" stroke="#222"/><rect x="3.5" y="3.5" width="5" height="5" fill="#222" stroke="#222"/><rect x="4.5" y="4.5" width="2" height="2" fill="#fff"/></svg>
<div class="a" style="left:987px;top:485px;border-left:2.5px solid transparent;border-right:2.5px solid transparent;border-bottom:3px solid #aaa"></div>
<div class="a" style="left:987px;top:592px;border-left:2.5px solid transparent;border-right:2.5px solid transparent;border-top:3px solid #777"></div>
<!-- group5 layers -->
<div class="a" style="left:822px;top:617px;width:173px;height:133px;background:#494949"></div>
<div class="a" style="left:822px;top:617px;width:173px;height:14px;background:#3a3a3a"></div>
<div class="a" style="left:822px;top:617px;width:28px;height:14px;background:#4d4d4d"></div>
<div class="t" style="left:826px;top:620px">图层</div>
<div class="t" style="left:855px;top:620px;color:#9c9c9c">画板</div>
<div class="a" style="left:824px;top:637px;width:168px;height:15px;background:#5d6676"></div>
<div class="a" style="left:840px;top:637px;width:1px;height:15px;background:#4a5260"></div>
<div class="a" style="left:858px;top:637px;width:2px;height:15px;background:#5b7ad6"></div>
<div class="a" style="left:863px;top:638px;width:1px;height:14px;background:#4a5260"></div>
<div class="a" style="left:877px;top:637px;width:1px;height:15px;background:#4a5260"></div>
<div class="a" style="left:966px;top:637px;width:1px;height:15px;background:#4a5260"></div>
<svg class="a" style="left:827px;top:640px" width="12" height="9"><path d="M1 4.5Q6 -1 11 4.5Q6 10 1 4.5z" fill="#ccc"/><circle cx="6" cy="4.5" r="1.6" fill="#444"/></svg>
<div class="a" style="left:866px;top:641px;border-top:4px solid transparent;border-bottom:4px solid transparent;border-left:6px solid #e8e8e8"></div>
<div class="a" style="left:879px;top:638px;width:13px;height:13px;background:#fff"></div>
<svg class="a" style="left:879px;top:638px" width="13" height="13"><path d="M6 3q-2 1-2 4l1 1h3l-1-2 2 0z" fill="#222"/><rect x="1" y="9" width="11" height="1.5" fill="#222"/></svg>
<div class="t" style="left:896px;top:640px;color:#eee">图层 1</div>
<svg class="a" style="left:971px;top:640px" width="10" height="10"><circle cx="5" cy="5" r="3.5" fill="none" stroke="#ddd" stroke-width="1.2"/></svg>
<div class="a" style="left:823px;top:652px;width:170px;height:83px;background:#474747;border:1px solid #5a5a5a;border-top:none"></div>
<svg class="a" style="left:824px;top:739px" width="168" height="12">
<text x="9" y="10" font-size="8" fill="#aaa" font-family="Liberation Sans">1 个图层</text>
<rect x="86" y="7" width="10" height="2" fill="#666"/><rect x="122" y="6" width="12" height="3" fill="#888"/>
<rect x="145" y="-3" width="8" height="9" fill="#5a5a5a"/>
</svg>
<!-- group6 -->
<div class="a" style="left:822px;top:751px;width:173px;height:17px;background:#3a3a3a"></div>
<div class="a" style="left:822px;top:751px;width:34px;height:17px;background:#4d4d4d"></div>
<div class="t" style="left:826px;top:755px">&#8900;变换</div>
<div class="t" style="left:860px;top:755px;color:#9c9c9c">对齐</div>
<div class="t" style="left:892px;top:755px;color:#9c9c9c">路径查找器</div>
<svg class="a" style="left:984px;top:63px" width="13" height="9"><path d="M0.5 3.5L4.5 3.5L2.5 6Z" fill="#e0e0e0"/><path d="M6 1.5H12M6 4H12M6 6.5H12" stroke="#aaa" stroke-width="1"/></svg>
<svg class="a" style="left:984px;top:172px" width="13" height="9"><path d="M0.5 3.5L4.5 3.5L2.5 6Z" fill="#e0e0e0"/><path d="M6 1.5H12M6 4H12M6 6.5H12" stroke="#aaa" stroke-width="1"/></svg>
<svg class="a" style="left:984px;top:280px" width="13" height="9"><path d="M0.5 3.5L4.5 3.5L2.5 6Z" fill="#e0e0e0"/><path d="M6 1.5H12M6 4H12M6 6.5H12" stroke="#aaa" stroke-width="1"/></svg>
<svg class="a" style="left:984px;top:464px" width="13" height="9"><path d="M0.5 3.5L4.5 3.5L2.5 6Z" fill="#e0e0e0"/><path d="M6 1.5H12M6 4H12M6 6.5H12" stroke="#aaa" stroke-width="1"/></svg>
<svg class="a" style="left:984px;top:620px" width="13" height="9"><path d="M0.5 3.5L4.5 3.5L2.5 6Z" fill="#e0e0e0"/><path d="M6 1.5H12M6 4H12M6 6.5H12" stroke="#aaa" stroke-width="1"/></svg>
<svg class="a" style="left:984px;top:755px" width="13" height="9"><path d="M0.5 3.5L4.5 3.5L2.5 6Z" fill="#e0e0e0"/><path d="M6 1.5H12M6 4H12M6 6.5H12" stroke="#aaa" stroke-width="1"/></svg>
<!-- RED BOX -->
<div class="a" style="left:814px;top:457px;width:186px;height:171px;border:4px solid #f41414"></div>
</body></html>
